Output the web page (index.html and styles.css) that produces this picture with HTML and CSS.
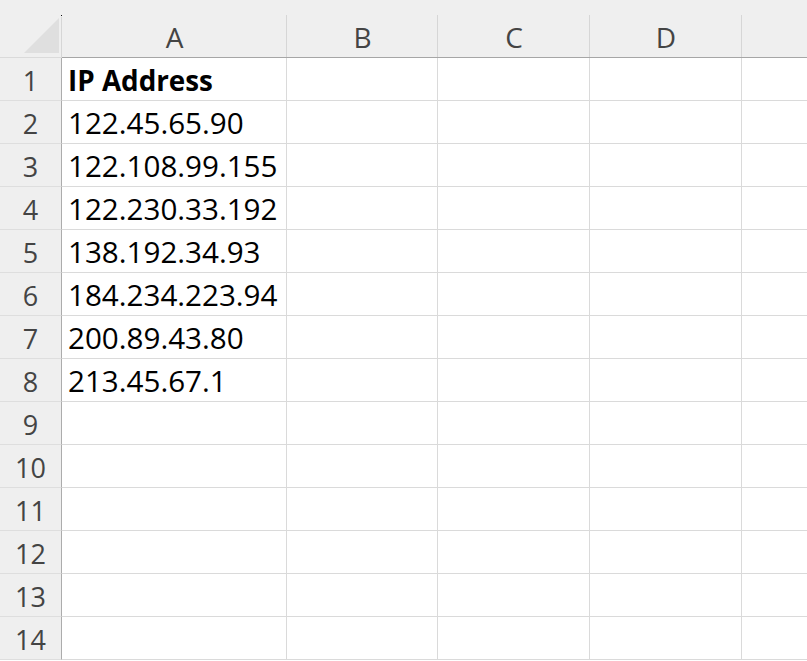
FILE: index.html
```html
<!DOCTYPE html>
<html lang="en">
<head>
    <meta charset="UTF-8">
    <title>Sheet</title>
    <link rel="stylesheet" href="styles.css">
</head>
<body>
    <div class="sheet">
        <div class="corner"><span class="tri"></span><span class="dot"></span></div>
        <div class="colhead">A</div>
        <div class="colhead">B</div>
        <div class="colhead">C</div>
        <div class="colhead">D</div>
        <div class="colhead last"></div>

        <div class="rowhead">1</div><div class="cell bold">IP Address</div><div class="cell"></div><div class="cell"></div><div class="cell"></div><div class="cell last"></div>
        <div class="rowhead">2</div><div class="cell">122.45.65.90</div><div class="cell"></div><div class="cell"></div><div class="cell"></div><div class="cell last"></div>
        <div class="rowhead">3</div><div class="cell">122.108.99.155</div><div class="cell"></div><div class="cell"></div><div class="cell"></div><div class="cell last"></div>
        <div class="rowhead">4</div><div class="cell">122.230.33.192</div><div class="cell"></div><div class="cell"></div><div class="cell"></div><div class="cell last"></div>
        <div class="rowhead">5</div><div class="cell">138.192.34.93</div><div class="cell"></div><div class="cell"></div><div class="cell"></div><div class="cell last"></div>
        <div class="rowhead">6</div><div class="cell">184.234.223.94</div><div class="cell"></div><div class="cell"></div><div class="cell"></div><div class="cell last"></div>
        <div class="rowhead">7</div><div class="cell">200.89.43.80</div><div class="cell"></div><div class="cell"></div><div class="cell"></div><div class="cell last"></div>
        <div class="rowhead">8</div><div class="cell">213.45.67.1</div><div class="cell"></div><div class="cell"></div><div class="cell"></div><div class="cell last"></div>
        <div class="rowhead">9</div><div class="cell"></div><div class="cell"></div><div class="cell"></div><div class="cell"></div><div class="cell last"></div>
        <div class="rowhead">10</div><div class="cell"></div><div class="cell"></div><div class="cell"></div><div class="cell"></div><div class="cell last"></div>
        <div class="rowhead">11</div><div class="cell"></div><div class="cell"></div><div class="cell"></div><div class="cell"></div><div class="cell last"></div>
        <div class="rowhead">12</div><div class="cell"></div><div class="cell"></div><div class="cell"></div><div class="cell"></div><div class="cell last"></div>
        <div class="rowhead">13</div><div class="cell"></div><div class="cell"></div><div class="cell"></div><div class="cell"></div><div class="cell last"></div>
        <div class="rowhead">14</div><div class="cell"></div><div class="cell"></div><div class="cell"></div><div class="cell"></div><div class="cell last"></div>
    </div>
</body>
</html>
```

FILE: styles.css
```css
body {
    margin: 0;
    padding: 0;
    background-color: #ffffff;
    font-family: "Open Sans", "Noto Sans", sans-serif;
    overflow: hidden;
}
.sheet {
    display: grid;
    grid-template-columns: 62px 225px 151px 152px 152px 1fr;
    grid-template-rows: 58px repeat(14, 43px);
    width: 807px;
}
.corner {
    position: relative;
    background-color: #efefef;
    border-bottom: 1px solid #dadada;
    background-image: linear-gradient(#d6d6d6, #d6d6d6);
    background-size: 1px 40px;
    background-position: right bottom;
    background-repeat: no-repeat;
}
.tri {
    position: absolute;
    right: 3px;
    bottom: 4px;
    width: 0;
    height: 0;
    border-left: 35px solid transparent;
    border-bottom: 35px solid #dfdfdf;
}
.dot {
    position: absolute;
    right: 0;
    top: 15px;
    width: 1px;
    height: 1px;
    background-color: #111;
}
.colhead {
    background-color: #efefef;
    border-bottom: 1px solid #a6a6a6;
    color: #444;
    font-size: 28px;
    text-align: center;
    padding-top: 18px;
    box-sizing: border-box;
    line-height: 38px;
    background-image: linear-gradient(#d6d6d6, #d6d6d6);
    background-size: 1px 42px;
    background-position: right bottom;
    background-repeat: no-repeat;
}
.rowhead {
    background-color: #efefef;
    border-right: 1px solid #acacac;
    border-bottom: 1px solid #dedede;
    color: #444;
    font-size: 27px;
    text-align: center;
    line-height: 42px;
    padding-top: 2px;
    box-sizing: border-box;
}
.cell {
    border-right: 1px solid #dadada;
    border-bottom: 1px solid #dadada;
    box-sizing: border-box;
    font-size: 29.6px;
    color: #000;
    padding: 1px 0 0 6px;
    line-height: 41px;
    white-space: nowrap;
}
.cell.last, .colhead.last {
    border-right: none;
    background-image: none;
}
.bold {
    font-weight: bold;
    font-size: 27.8px;
    padding-top: 2px;
    line-height: 40px;
}
```
